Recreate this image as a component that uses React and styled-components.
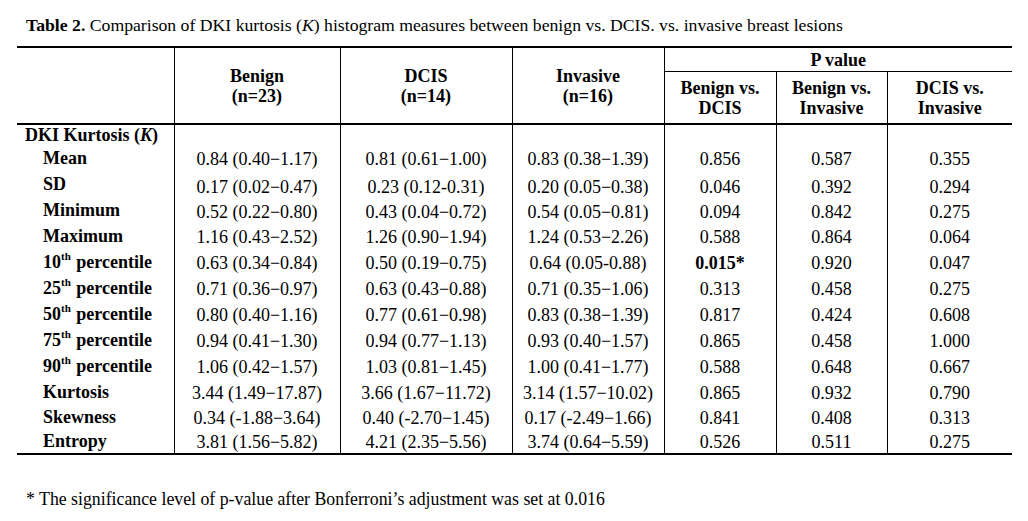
import React from 'react';
import styled, { createGlobalStyle } from 'styled-components';

const GlobalStyle = createGlobalStyle`
  html, body {
    margin: 0;
    padding: 0;
    background: #fff;
  }
  body {
    font-family: "Liberation Serif", "Times New Roman", serif;
    color: #000;
  }
`;

const Page = styled.div`
  width: 1028px;
  height: 521px;
  box-sizing: border-box;
  padding: 15px 0 0 17px;
  display: flex;
  flex-direction: column;
`;

const Title = styled.div`
  font-size: 17.7px;
  line-height: 20px;
  margin: 0 0 11px 9px;
  white-space: nowrap;
  b { font-weight: 700; }
`;

const Table = styled.table`
  border-collapse: collapse;
  table-layout: fixed;
  width: 995px;
  font-size: 18px;
  border-top: 2px solid #000;
  border-bottom: 2px solid #000;
`;

const HeadCell = styled.th`
  font-weight: 700;
  text-align: center;
  vertical-align: middle;
  padding: 0;
  line-height: 20px;
  border-left: ${({ first }) => (first ? 'none' : '1px solid #000')};
  border-bottom: ${({ sub }) => (sub ? '1px solid #000' : 'none')};
  height: ${({ h }) => h}px;
`;

const HeadRow = styled.tr`
  border-bottom: ${({ last }) => (last ? '2px solid #000' : 'none')};
`;

const Row = styled.tr`
  height: ${({ h }) => h}px;
`;

const Label = styled.td`
  font-weight: 700;
  padding: 0 0 0 ${({ indent }) => (indent ? 26 : 8)}px;
  line-height: 20px;
  white-space: nowrap;
  vertical-align: middle;
  sup {
    font-size: 11px;
    line-height: 0;
    vertical-align: 8px;
    margin-right: 1px;
  }
`;

const Cell = styled.td`
  text-align: center;
  vertical-align: middle;
  padding: ${({ shift }) => (shift || 0) + 2}px 0 0;
  line-height: 20px;
  white-space: nowrap;
  border-left: 1px solid #000;
  font-weight: ${({ bold }) => (bold ? 700 : 400)};
`;

const Footnote = styled.div`
  font-size: 17.8px;
  margin: 34px 0 0 9px;
  white-space: nowrap;
`;

const widths = [157, 166, 172, 152, 112, 111, 125];

const rows = [
  { label: 'Mean', h: 26, v: ['0.84 (0.40−1.17)', '0.81 (0.61−1.00)', '0.83 (0.38−1.39)', '0.856', '0.587', '0.355'] },
  { label: 'SD', h: 26, v: ['0.17 (0.02−0.47)', '0.23 (0.12-0.31)', '0.20 (0.05−0.38)', '0.046', '0.392', '0.294'], shift: 3 },
  { label: 'Minimum', h: 26, v: ['0.52 (0.22−0.80)', '0.43 (0.04−0.72)', '0.54 (0.05−0.81)', '0.094', '0.842', '0.275'], shift: 2 },
  { label: 'Maximum', h: 26, v: ['1.16 (0.43−2.52)', '1.26 (0.90−1.94)', '1.24 (0.53−2.26)', '0.588', '0.864', '0.064'] },
  { label: 'percentile', sup: '10', h: 26, v: ['0.63 (0.34−0.84)', '0.50 (0.19−0.75)', '0.64 (0.05-0.88)', '0.015*', '0.920', '0.047'], bold: 3 },
  { label: 'percentile', sup: '25', h: 26, v: ['0.71 (0.36−0.97)', '0.63 (0.43−0.88)', '0.71 (0.35−1.06)', '0.313', '0.458', '0.275'] },
  { label: 'percentile', sup: '50', h: 26, v: ['0.80 (0.40−1.16)', '0.77 (0.61−0.98)', '0.83 (0.38−1.39)', '0.817', '0.424', '0.608'] },
  { label: 'percentile', sup: '75', h: 26, v: ['0.94 (0.41−1.30)', '0.94 (0.77−1.13)', '0.93 (0.40−1.57)', '0.865', '0.458', '1.000'] },
  { label: 'percentile', sup: '90', h: 26, v: ['1.06 (0.42−1.57)', '1.03 (0.81−1.45)', '1.00 (0.41−1.77)', '0.588', '0.648', '0.667'] },
  { label: 'Kurtosis', h: 25, v: ['3.44 (1.49−17.87)', '3.66 (1.67−11.72)', '3.14 (1.57−10.02)', '0.865', '0.932', '0.790'] },
  { label: 'Skewness', h: 25, v: ['0.34 (-1.88−3.64)', '0.40 (-2.70−1.45)', '0.17 (-2.49−1.66)', '0.841', '0.408', '0.313'] },
  { label: 'Entropy', h: 25, v: ['3.81 (1.56−5.82)', '4.21 (2.35−5.56)', '3.74 (0.64−5.59)', '0.526', '0.511', '0.275'] },
];

const App = () => (
  <>
    <GlobalStyle />
    <Page>
      <Title>
        <b>Table 2.</b> Comparison of DKI kurtosis (<i>K</i>) histogram measures between benign vs. DCIS. vs. invasive breast lesions
      </Title>
      <Table>
        <colgroup>
          {widths.map((w, i) => <col key={i} style={{ width: w }} />)}
        </colgroup>
        <thead>
          <HeadRow>
            <HeadCell first rowSpan={2} />
            <HeadCell rowSpan={2}>Benign<br />(n=23)</HeadCell>
            <HeadCell rowSpan={2}>DCIS<br />(n=14)</HeadCell>
            <HeadCell rowSpan={2}>Invasive<br />(n=16)</HeadCell>
            <HeadCell colSpan={3} sub h={23}>P value</HeadCell>
          </HeadRow>
          <HeadRow last>
            <HeadCell h={51}>Benign vs.<br />DCIS</HeadCell>
            <HeadCell h={51}>Benign vs.<br />Invasive</HeadCell>
            <HeadCell h={51}>DCIS vs.<br />Invasive</HeadCell>
          </HeadRow>
        </thead>
        <tbody>
          <Row h={21}>
            <Label>DKI Kurtosis (<i>K</i>)</Label>
            {[0, 1, 2, 3, 4, 5].map(i => <Cell key={i} />)}
          </Row>
          {rows.map(r => (
            <Row key={r.label + (r.sup || '')} h={r.h}>
              <Label indent>
                {r.sup && <>{r.sup}<sup>th</sup> </>}
                {r.label}
              </Label>
              {r.v.map((val, i) => (
                <Cell key={i} bold={r.bold === i} shift={r.shift}>{val}</Cell>
              ))}
            </Row>
          ))}
        </tbody>
      </Table>
      <Footnote>* The significance level of p-value after Bonferroni’s adjustment was set at 0.016</Footnote>
    </Page>
  </>
);

export default App;
